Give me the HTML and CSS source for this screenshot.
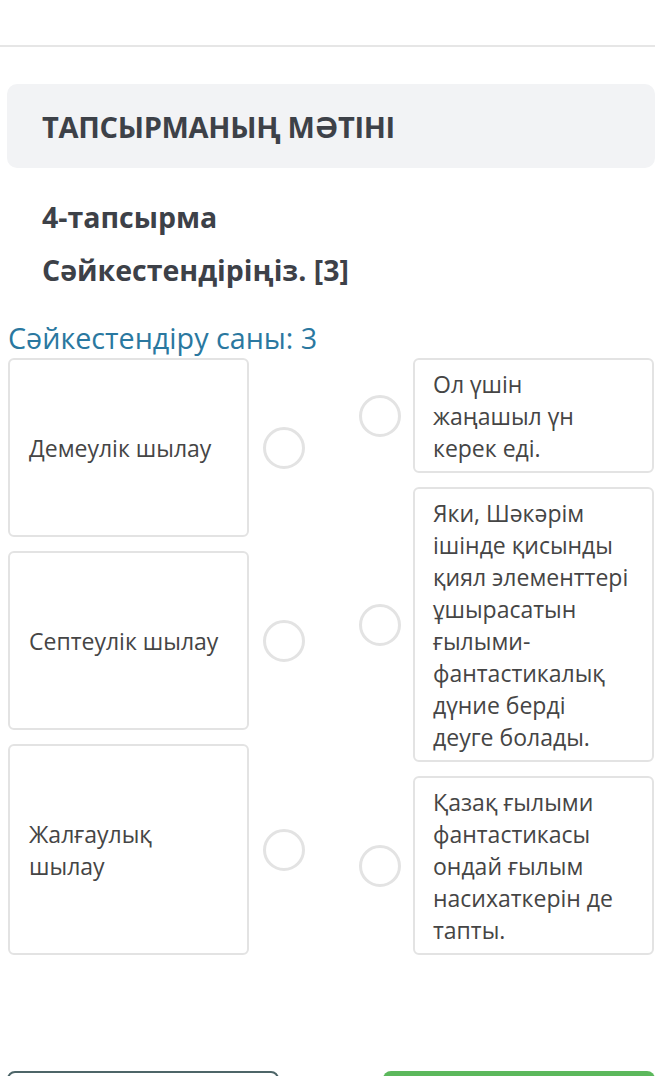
FILE: index.html
```html
<!DOCTYPE html>
<html lang="kk">
<head>
<meta charset="utf-8">
<link rel="stylesheet" href="styles.css">
</head>
<body>
<div class="topbar"></div>
<div class="panel"><h1 class="panel-title">ТАПСЫРМАНЫҢ МӘТІНІ</h1></div>
<div class="task">
  <p class="task-line">4-тапсырма</p>
  <p class="task-line">Сәйкестендіріңіз. [3]</p>
</div>
<div class="count">Сәйкестендіру саны: 3</div>
<div class="match">
  <div class="col col-left">
    <div class="item h179"><div class="card card-center">Демеулік шылау</div><span class="dot"></span></div>
    <div class="item h179"><div class="card card-center">Септеулік шылау</div><span class="dot"></span></div>
    <div class="item h211"><div class="card card-center">Жалғаулық<br>шылау</div><span class="dot"></span></div>
  </div>
  <div class="col col-right">
    <div class="item h115"><span class="dot"></span><div class="card">Ол үшін<br>жаңашыл үн<br>керек еді.</div></div>
    <div class="item h275"><span class="dot"></span><div class="card">Яки, Шәкәрім<br>ішінде қисынды<br>қиял элементтері<br>ұшырасатын<br>ғылыми-<br>фантастикалық<br>дүние берді<br>деуге болады.</div></div>
    <div class="item h179"><span class="dot"></span><div class="card">Қазақ ғылыми<br>фантастикасы<br>ондай ғылым<br>насихаткерін де<br>тапты.</div></div>
  </div>
</div>
<div class="buttons">
  <div class="btn btn-outline"></div>
  <div class="btn btn-green"></div>
</div>
</body>
</html>
```
FILE: styles.css
```css
html, body {
  margin: 0;
  padding: 0;
  background: #ffffff;
  font-family: "Open Sans", "Noto Sans", sans-serif;
  color: #3d4148;
  overflow: hidden;
}
.topbar {
  height: 45px;
  border-bottom: 2px solid #e6e6e6;
}
.panel {
  margin: 37px 0 0 7px;
  height: 84px;
  background: #f2f3f5;
  border-radius: 10px;
  display: flex;
  align-items: center;
  padding-left: 35px;
}
.panel-title {
  margin: 0;
  font-size: 29px;
  font-weight: 700;
  letter-spacing: -0.3px;
  color: #3d4148;
  line-height: 1;
}
.task {
  padding: 23px 0 0 42px;
}
.task-line {
  margin: 0;
  font-size: 28.5px;
  font-weight: 700;
  line-height: 53px;
  color: #3d4148;
}
.count {
  margin: 23px 0 0 8px;
  font-size: 28.7px;
  line-height: 36px;
  color: #2a78a0;
}
.match {
  display: flex;
  gap: 54px;
  padding-left: 8px;
  margin-top: 2px;
}
.col {
  display: flex;
  flex-direction: column;
  gap: 14px;
}
.item {
  display: flex;
  align-items: center;
}
.col-left .item { gap: 14px; }
.col-right .item { gap: 12px; }
.h179 { height: 179px; }
.h211 { height: 211px; }
.h115 { height: 115px; }
.h275 { height: 275px; }
.card {
  box-sizing: border-box;
  width: 241px;
  height: 100%;
  border: 2px solid #e3e3e3;
  border-radius: 6px;
  padding: 8px 18px;
  font-size: 23px;
  line-height: 32px;
  color: #454545;
  background: #fff;
}
.card-center {
  display: flex;
  align-items: center;
  padding: 0 19px;
}
.dot {
  box-sizing: border-box;
  width: 42px;
  height: 42px;
  border: 3px solid #e3e3e3;
  border-radius: 50%;
  flex: none;
}
.buttons {
  display: flex;
  justify-content: space-between;
  margin-top: 116px;
  padding-left: 7px;
}
.btn {
  height: 50px;
  border-radius: 8px;
  box-sizing: border-box;
}
.btn-outline {
  width: 272px;
  border: 2px solid #4d6568;
}
.btn-green {
  width: 272px;
  background: #5cb85c;
}
```
